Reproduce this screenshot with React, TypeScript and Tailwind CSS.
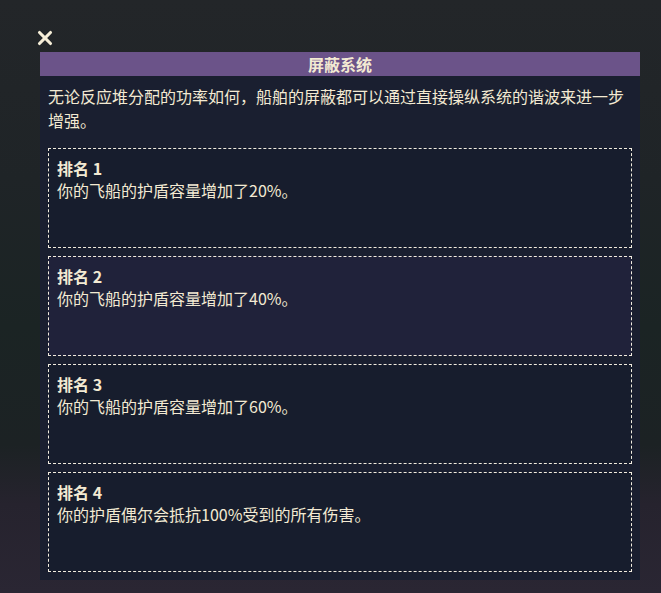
import { X } from "lucide-react";

const ranks = [
  { name: "排名 1", text: "你的飞船的护盾容量增加了20%。", active: false },
  { name: "排名 2", text: "你的飞船的护盾容量增加了40%。", active: true },
  { name: "排名 3", text: "你的飞船的护盾容量增加了60%。", active: false },
  { name: "排名 4", text: "你的护盾偶尔会抵抗100%受到的所有伤害。", active: false },
];

const RankCard = ({ name, text, active }: { name: string; text: string; active: boolean }) => (
  <div
    className={`h-[100px] border border-dashed border-[#f2ecdf] px-2 py-2 ${
      active ? "bg-[#20223a]" : "bg-[#171d2d]"
    }`}
  >
    <div className="font-bold leading-[22px]">{name}</div>
    <div className="leading-[22px]">{text}</div>
  </div>
);

const App = () => {
  return (
    <div
      className="h-[593px] w-[661px] overflow-hidden bg-[linear-gradient(180deg,#232629_0%,#1f2427_30%,#1b2424_55%,#1c2224_75%,#26232e_85%,#2a2633_100%)] pl-10 pt-8 text-[16px] text-[#f3ead3]"
      style={{ fontFamily: '"Noto Sans CJK SC", "Noto Sans", sans-serif' }}
    >
      <div className="flex h-5">
        <X className="-ml-[6px] -mt-[5px] h-[22px] w-[22px] text-[#f6eed8]" strokeWidth={3.4} />
      </div>
      <div className="w-[600px] bg-[#1a1f30]">
        <div className="flex h-6 items-center justify-center bg-[#6b5389] font-bold leading-6">
          屏蔽系统
        </div>
        <p className="px-2 pt-2 leading-6">
          无论反应堆分配的功率如何，船舶的屏蔽都可以通过直接操纵系统的谐波来进一步增强。
        </p>
        <div className="mt-4 flex flex-col gap-2 px-2 pb-2">
          {ranks.map((r) => (
            <RankCard key={r.name} {...r} />
          ))}
        </div>
      </div>
    </div>
  );
};

export default App;
